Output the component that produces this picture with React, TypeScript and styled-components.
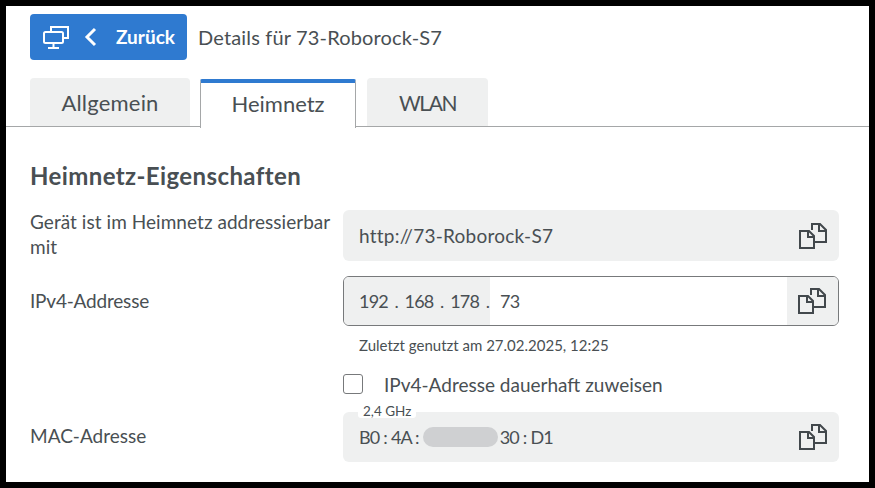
import React from "react";
import styled, { createGlobalStyle } from "styled-components";

const Global = createGlobalStyle`
  html, body { margin: 0; padding: 0; background: #000; }
  body { font-family: "Lato", "Noto Sans", sans-serif; color: #494f53; }
`;

const Frame = styled.div`
  width: 875px; height: 488px; box-sizing: border-box; border: 6px solid #000; background: #fff; overflow: hidden;
`;
const Header = styled.div`
  display: flex; align-items: center; gap: 11px; padding: 8px 0 0 24px; height: 46px;
`;
const BackButton = styled.div`
  width: 157px; height: 46px; box-sizing: border-box; background: #2f7ad0; border-radius: 4px; color: #fff;
  display: flex; align-items: center; padding-left: 13px; font-size: 19px; font-weight: 700;
`;
const BackLabel = styled.span`margin-left: 19px; position: relative; top: -1px;`;
const Chevron = styled.svg`margin-left: 14px;`;
const Title = styled.span`font-size: 20px; letter-spacing: 0.16px; margin-top: -1px;`;
const Tabs = styled.div`
  display: flex; gap: 10px; margin-top: 18px; padding-left: 24px; height: 48px; border-bottom: 1px solid #a5a7a8;
`;
const Tab = styled.div<{ $w: number; $active?: boolean; $spacing?: number; $size?: number }>`
  width: ${p => p.$w}px; box-sizing: border-box; display: flex; align-items: center; justify-content: center;
  font-size: ${p => p.$size ?? 22}px; letter-spacing: ${p => p.$spacing ?? 0}px; border-radius: 4px 4px 0 0; padding-top: 1px;
  background: ${p => (p.$active ? "#fff" : "#eff0f0")};
  ${p => p.$active ? `
    height: 49px; margin: 1px 1px 0 0; padding: 0 0 4px; border: 1px solid #a5a7a8; border-top: 4px solid #2f7ad0; border-bottom: none; border-radius: 2px 2px 0 0;
  ` : ""}
`;
const Content = styled.div`padding: 34px 30px 0 24px;`;
const SectionTitle = styled.h2`
  margin: 0; font-size: 24px; font-weight: 700; line-height: 30px; letter-spacing: 0.4px;
`;
const Row = styled.div<{ $mt: number; $center?: boolean }>`
  display: grid; grid-template-columns: 313px 496px; margin-top: ${p => p.$mt}px;
  align-items: ${p => (p.$center ? "center" : "start")};
`;
const Label = styled.div<{ $spacing?: number; $lift?: number }>`
  font-size: 19px; line-height: 24.5px; letter-spacing: ${p => p.$spacing ?? 0}px; padding-bottom: ${p => p.$lift ?? 0}px;
`;
const Field = styled.div<{ $h: number }>`
  position: relative; height: ${p => p.$h}px; background: #eff0f0; border-radius: 6px; display: flex; align-items: center;
  padding-left: 16px; font-size: 19px; letter-spacing: 0.25px; justify-content: space-between;
`;
const CopyBox = styled.span`
  width: 52px; align-self: stretch; display: flex; align-items: center; justify-content: center; flex: none;
`;
const InputField = styled.div`
  height: 50px; box-sizing: border-box; border: 1px solid #77797b; border-radius: 6px; display: flex; overflow: hidden; align-items: stretch;
`;
const Prefix = styled.div`
  width: 146px; box-sizing: border-box; padding-left: 15px; background: #eff0f0; display: flex; align-items: center;
  font-size: 18px; letter-spacing: -0.8px; word-spacing: 2.8px; white-space: pre;
`;
const Suffix = styled.div`flex: 1; display: flex; align-items: center; padding-left: 10px; font-size: 18px; letter-spacing: -0.8px;`;
const CopyCell = styled(CopyBox)`background: #eff0f0; width: 51px; padding-right: 1px; box-sizing: border-box;`;
const Hint = styled.div`
  margin: 9px 0 0 329px; font-size: 15px; line-height: 20px;
`;
const CheckRow = styled.div`
  display: flex; align-items: center; margin: 15px 0 0 313px; height: 28px; font-size: 19px;
`;
const Box = styled.span`
  width: 20px; height: 20px; box-sizing: border-box; border: 1px solid #77797b; border-radius: 3px; margin-right: 21px;
`;
const Band = styled.span`
  position: absolute; left: 15px; top: -8px; padding: 0 5px; background: #fff; font-size: 13.5px; line-height: 14px; letter-spacing: 0; word-spacing: 0; border-radius: 3px;
`;
const Mac = styled.span`
  display: flex; align-items: center; white-space: pre; font-size: 18px; letter-spacing: -0.9px; word-spacing: 0.3px;
`;
const Blur = styled.span`
  display: inline-block; width: 75px; height: 20px; background: #cfd0d2; border-radius: 10px; margin: 0 2px 0 0;
`;

const CopyIcon = () => (
  <svg width="28" height="26" viewBox="0 0 28 26" fill="none" stroke="#42484c" strokeWidth="2">
    <path d="M1 8h9l5 5v12H1z" />
    <path d="M9 8v6h6" />
    <path d="M13 7V1h8l6 6v12H16" />
    <path d="M20 1v7h7" />
  </svg>
);

export default function App() {
  return (
    <Frame>
      <Global />
      <Header>
        <BackButton>
          <svg width="26" height="23" viewBox="0 0 26 23" fill="none" stroke="#fff" strokeWidth="2">
            <path d="M8 5V1h17v11h-5" />
            <rect x="1" y="6" width="19" height="11" rx="1.500" />
            <path d="M10.500 17v4M5 22h11" />
          </svg>
          <Chevron width="14" height="22" viewBox="0 0 14 22" fill="none" stroke="#fff" strokeWidth="3">
            <path d="M12 3 4 11l8 8" />
          </Chevron>
          <BackLabel>Zurück</BackLabel>
        </BackButton>
        <Title>Details für 73-Roborock-S7</Title>
      </Header>
      <Tabs>
        <Tab $w={160} $spacing={0.2}>Allgemein</Tab>
        <Tab $w={156} $active>Heimnetz</Tab>
        <Tab $w={121} $size={21} $spacing={-1.4}>WLAN</Tab>
      </Tabs>
      <Content>
        <SectionTitle>Heimnetz-Eigenschaften</SectionTitle>
        <Row $mt={19}>
          <Label $spacing={0.05}>Gerät ist im Heimnetz addressierbar mit</Label>
          <Field $h={51}>
            http://73-Roborock-S7
            <CopyBox><CopyIcon /></CopyBox>
          </Field>
        </Row>
        <Row $mt={15} $center>
          <Label $spacing={-0.2}>IPv4-Addresse</Label>
          <InputField>
            <Prefix>192 . 168 . 178 .</Prefix>
            <Suffix>73</Suffix>
            <CopyCell><CopyIcon /></CopyCell>
          </InputField>
        </Row>
        <Hint>Zuletzt genutzt am 27.02.2025, 12:25</Hint>
        <CheckRow>
          <Box />
          IPv4-Adresse dauerhaft zuweisen
        </CheckRow>
        <Row $mt={14} $center>
          <Label $lift={1}>MAC-Adresse</Label>
          <Field $h={50}>
            <Band>2,4 GHz</Band>
            <Mac>B0 : 4A : <Blur />30 : D1</Mac>
            <CopyBox><CopyIcon /></CopyBox>
          </Field>
        </Row>
      </Content>
    </Frame>
  );
}
